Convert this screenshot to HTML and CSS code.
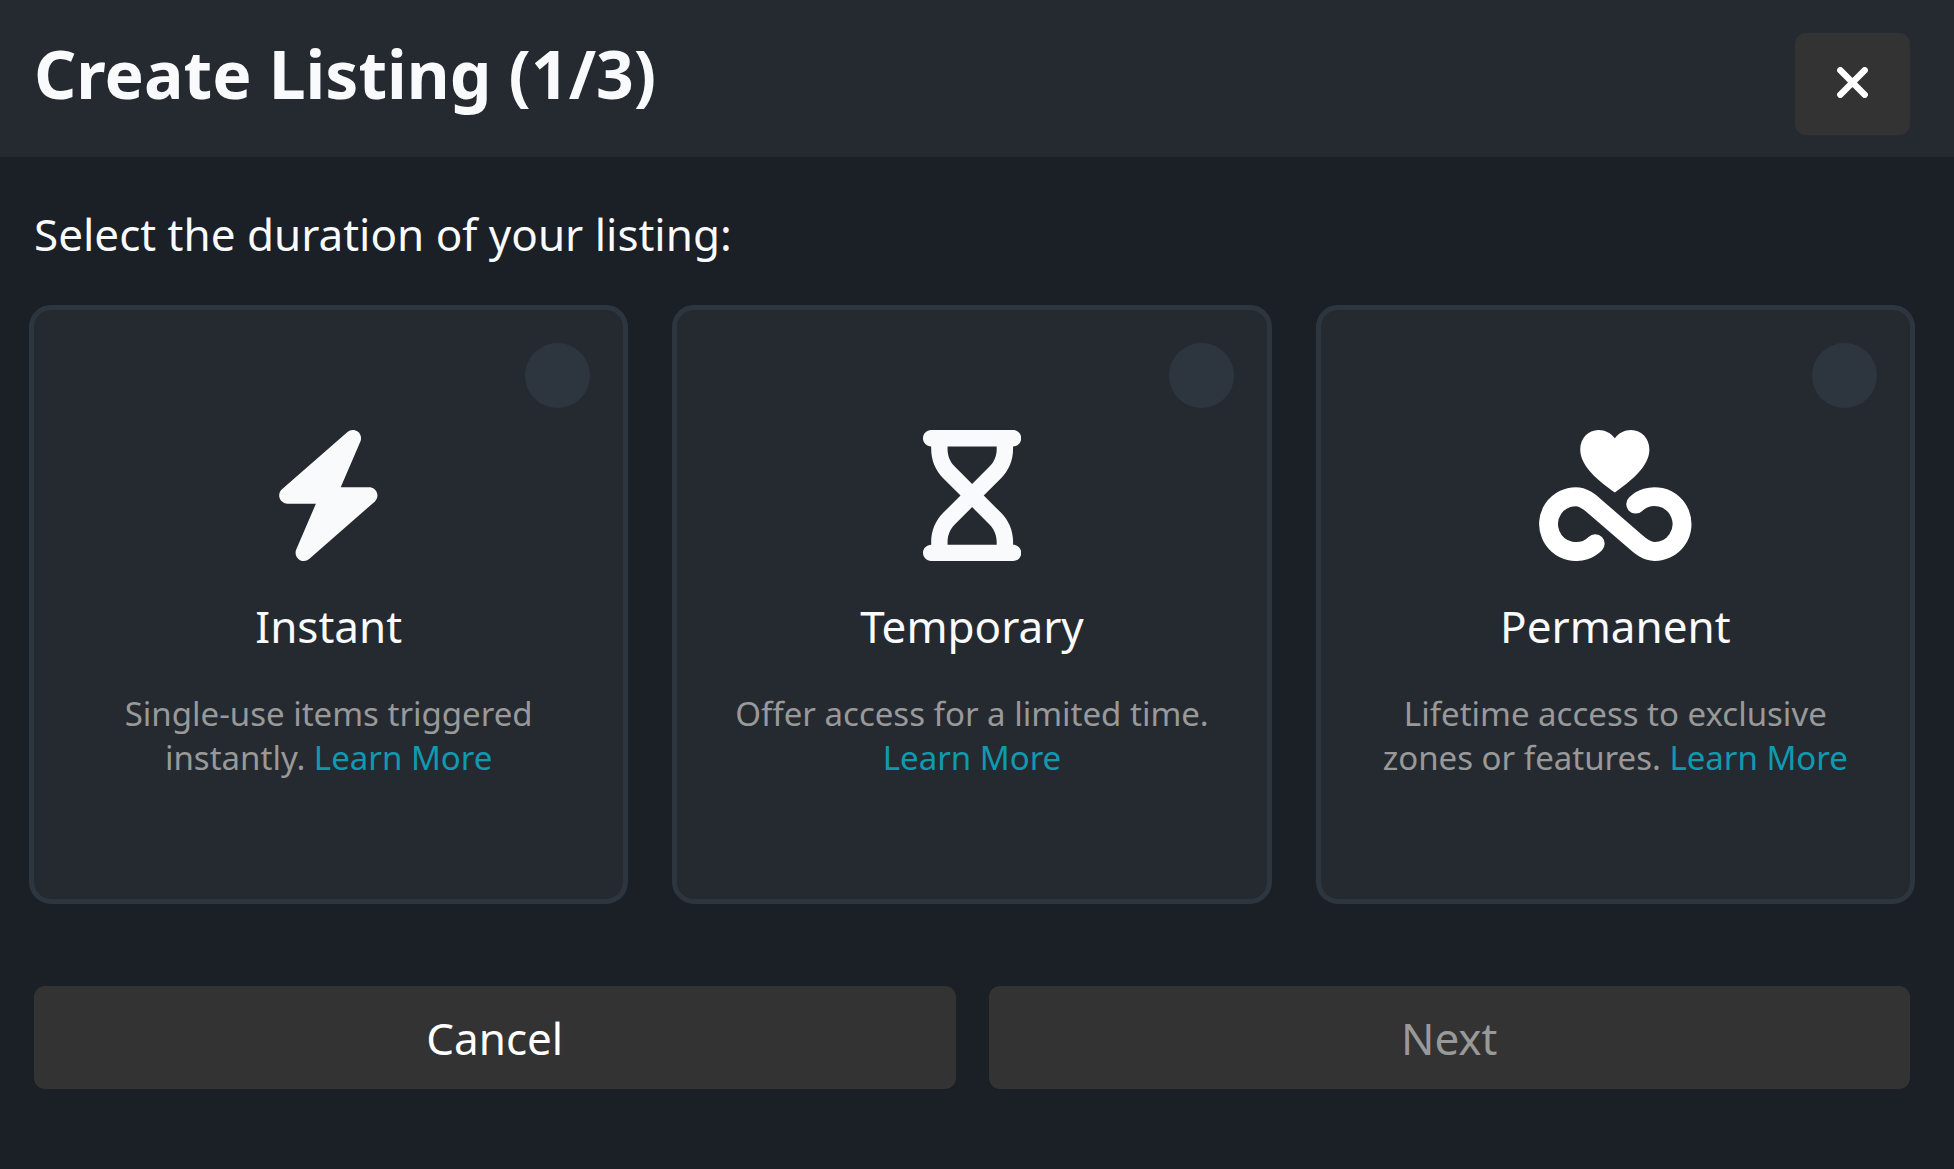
FILE: index.html
```html
<!DOCTYPE html>
<html lang="en">
<head>
  <meta charset="utf-8">
  <meta name="viewport" content="width=device-width, initial-scale=1">
  <title>Create Listing</title>
  <link rel="stylesheet" href="styles.css">
</head>
<body>
  <header class="header">
    <h1 class="title">Create Listing (1/3)</h1>
    <button class="button close" type="button" aria-label="Close">
      <svg class="close-icon" viewBox="0 0 31 31" aria-hidden="true"><path d="M3.300 3.300L27.700 27.700M27.700 3.300L3.300 27.700"/></svg>
    </button>
  </header>
  <form class="content">
    <fieldset class="durations">
      <legend class="prompt">Select the duration of your listing:</legend>
      <div class="cards">
        <div class="card">
          <input class="radio" type="radio" name="duration" id="instant" value="instant">
          <svg class="icon" viewBox="0 0 448 512" aria-hidden="true"><path d="M349.4 44.6c5.9-13.7 1.5-29.7-10.6-38.5s-28.6-8-39.900 1.800l-256 224c-10 8.800-13.600 22.900-8.900 35.300S50.700 288 64 288H175.500L98.600 467.400c-5.900 13.700-1.500 29.700 10.600 38.500s28.600 8 39.900-1.800l256-224c10-8.800 13.600-22.900 8.900-35.300s-16.600-20.700-30-20.700H272.500L349.400 44.600z"/></svg>
          <label class="card-title" for="instant">Instant</label>
          <p class="description">Single-use items triggered instantly. <a class="link" href="#instant">Learn More</a></p>
        </div>
        <div class="card">
          <input class="radio" type="radio" name="duration" id="temporary" value="temporary">
          <svg class="icon" viewBox="0 0 384 512" aria-hidden="true"><path d="M0 32C0 14.300 14.300 0 32 0H352c17.700 0 32 14.300 32 32s-14.300 32-32 32V75c0 42.400-16.900 83.100-46.900 113.100L237.300 256l67.900 67.900c30 30 46.900 70.700 46.900 113.100v11c17.700 0 32 14.300 32 32s-14.300 32-32 32H32c-17.700 0-32-14.300-32-32s14.300-32 32-32V437c0-42.400 16.900-83.100 46.900-113.100L146.700 256 78.900 188.100C48.900 158.100 32 117.400 32 75V64C14.300 64 0 49.700 0 32zM96 64V75c0 25.500 10.100 49.900 28.100 67.900L192 210.700l67.900-67.900c18-18 28.100-42.400 28.100-67.900V64H96zm0 384H288V437c0-25.500-10.100-49.900-28.100-67.900L192 301.300l-67.900 67.900c-18 18-28.100 42.400-28.100 67.900v11z"/></svg>
          <label class="card-title" for="temporary">Temporary</label>
          <p class="description">Offer access for a limited time. <a class="link" href="#temporary">Learn More</a></p>
        </div>
        <div class="card">
          <input class="radio" type="radio" name="duration" id="permanent" value="permanent">
          <svg class="icon icon-white" viewBox="57 59 459 394" aria-hidden="true">
            <path d="M285 247C240 216 181 170 181 118C181 84 205 59 236 59C256 59 273 68 285 84C297 68 314 59 334 59C365 59 389 84 389 118C389 170 330 216 285 247Z"/>
            <path class="loop" d="M226 401A82.500 82.500 0 1 1 168 259.500C190 259.500 208 274 226 290L346 394C364 410 382 424.500 404 424.500A82.500 82.500 0 1 0 348 282"/>
          </svg>
          <label class="card-title" for="permanent">Permanent</label>
          <p class="description">Lifetime access to exclusive zones or features. <a class="link" href="#permanent">Learn More</a></p>
        </div>
      </div>
    </fieldset>
    <div class="actions">
      <button class="button" type="button">Cancel</button>
      <button class="button" type="submit" disabled>Next</button>
    </div>
  </form>
</body>
</html>
```
FILE: styles.css
```css
* {
  box-sizing: border-box;
}

body {
  margin: 0;
  background: #1b1f26;
  color: #f9fafb;
  font-family: "Noto Sans", sans-serif;
  font-size: 44px;
  line-height: 66px;
}

.header {
  display: flex;
  justify-content: space-between;
  align-items: flex-start;
  padding: 33px 44px 22px 34px;
  background: #252a31;
}

.title {
  margin: 0;
  font-size: 66px;
  font-weight: 700;
  line-height: 80px;
}

.button {
  flex: 1;
  padding: 19px 22px 18px;
  border: 0;
  border-radius: 11px;
  background: #333;
  color: #fff;
  font: inherit;
}

.button:disabled {
  color: #999;
}

.close {
  display: flex;
  flex: none;
  justify-content: center;
  width: 115px;
  padding: 34px 22px 37px;
}

.close-icon {
  width: 31px;
  height: 31px;
  fill: none;
  stroke: #fff;
  stroke-width: 6.4;
  stroke-linecap: round;
}

.content {
  padding: 44px 39px 80px 29px;
}

.durations {
  min-width: 0;
  margin: 0;
  padding: 0;
  border: 0;
}

.prompt {
  padding: 0 5px 38px;
}

.cards {
  display: grid;
  grid-template-columns: repeat(3, minmax(0, 1fr));
  gap: 44px;
}

.card {
  display: flex;
  flex-direction: column;
  align-items: center;
  aspect-ratio: 1;
  padding: 33px;
  border: 5px solid #2d363f;
  border-radius: 22px;
  background: #252a31;
  text-align: center;
}

.radio {
  appearance: none;
  align-self: flex-end;
  flex: none;
  width: 65px;
  height: 65px;
  margin: 0 0 22px;
  border-radius: 50%;
  background: #2d363f;
}

.radio:checked {
  border: 16px solid #2d363f;
  background: #0e9bb2;
}

.icon {
  flex: none;
  height: 131px;
  margin-bottom: 32px;
  fill: #f9fafb;
}

.icon-white {
  fill: #fff;
}

.loop {
  fill: none;
  stroke: #fff;
  stroke-width: 57;
  stroke-linecap: round;
}

.description {
  margin: 33px 0 0;
  padding: 0 16px;
  color: #999;
  font-size: 33px;
  line-height: 44px;
}

.link {
  color: #0e9bb2;
  text-decoration: none;
}

.actions {
  display: flex;
  gap: 33px;
  padding: 82px 5px 0;
}
```
